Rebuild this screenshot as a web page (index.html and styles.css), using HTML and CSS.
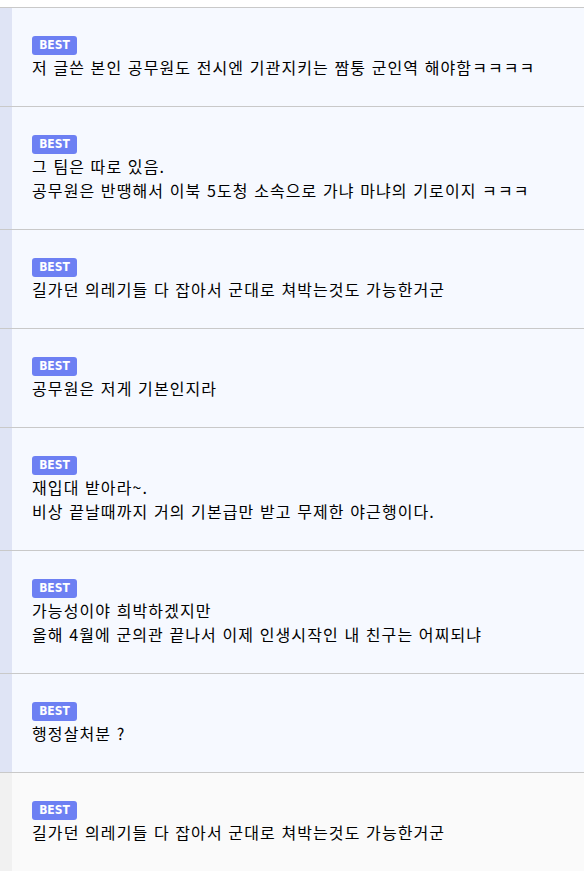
FILE: index.html
```html
<!DOCTYPE html>
<html lang="ko">
<head>
<meta charset="utf-8">
<link rel="stylesheet" href="styles.css">
</head>
<body>
<ul class="list">
  <li class="item best">
    <div class="body">
      <span class="badge">BEST</span>
      <p class="text">저 글쓴 본인 공무원도 전시엔 기관지키는 짬퉁 군인역 해야함ㅋㅋㅋㅋ</p>
    </div>
  </li>
  <li class="item best">
    <div class="body">
      <span class="badge">BEST</span>
      <p class="text">그 팀은 따로 있음.<br>공무원은 반땡해서 이북 5도청 소속으로 가냐 마냐의 기로이지 ㅋㅋㅋ</p>
    </div>
  </li>
  <li class="item best">
    <div class="body">
      <span class="badge">BEST</span>
      <p class="text">길가던 의레기들 다 잡아서 군대로 쳐박는것도 가능한거군</p>
    </div>
  </li>
  <li class="item best">
    <div class="body">
      <span class="badge">BEST</span>
      <p class="text">공무원은 저게 기본인지라</p>
    </div>
  </li>
  <li class="item best">
    <div class="body">
      <span class="badge">BEST</span>
      <p class="text">재입대 받아라~.<br>비상 끝날때까지 거의 기본급만 받고 무제한 야근행이다.</p>
    </div>
  </li>
  <li class="item best">
    <div class="body">
      <span class="badge">BEST</span>
      <p class="text">가능성이야 희박하겠지만<br>올해 4월에 군의관 끝나서 이제 인생시작인 내 친구는 어찌되냐</p>
    </div>
  </li>
  <li class="item best">
    <div class="body">
      <span class="badge">BEST</span>
      <p class="text">행정살처분 ?</p>
    </div>
  </li>
  <li class="item plain">
    <div class="body">
      <span class="badge">BEST</span>
      <p class="text">길가던 의레기들 다 잡아서 군대로 쳐박는것도 가능한거군</p>
    </div>
  </li>
</ul>
</body>
</html>
```

FILE: styles.css
```css
html, body {
  margin: 0;
  padding: 0;
  background: #ffffff;
}

body {
  font-family: "Noto Sans CJK KR", "Noto Sans", sans-serif;
  color: #000000;
}

.list {
  list-style: none;
  margin: 0;
  padding: 7px 0 0 0;
}

.item {
  border-top: 1px solid #c9c9c9;
  padding-left: 12px;
}

.item.best {
  background: #dfe4f5;
}

.item.plain {
  background: #f1f1f1;
  border-bottom: 1px dotted #b5b5b5;
}

.body {
  display: flex;
  flex-direction: column;
  align-items: flex-start;
  padding: 28px 0 27px 20px;
}

.best .body {
  background: #f6f9ff;
}

.plain .body {
  background: #fafafa;
}

.badge {
  display: block;
  width: 45px;
  height: 19px;
  line-height: 19px;
  text-align: center;
  border-radius: 3px;
  background: #6d80f3;
  color: #ffffff;
  font-family: "DejaVu Sans Condensed", "DejaVu Sans", sans-serif;
  font-weight: bold;
  font-size: 12px;
}

.text {
  margin: 0;
  font-size: 16px;
  line-height: 24px;
  font-weight: 400;
  letter-spacing: 1.1px;
}
```
